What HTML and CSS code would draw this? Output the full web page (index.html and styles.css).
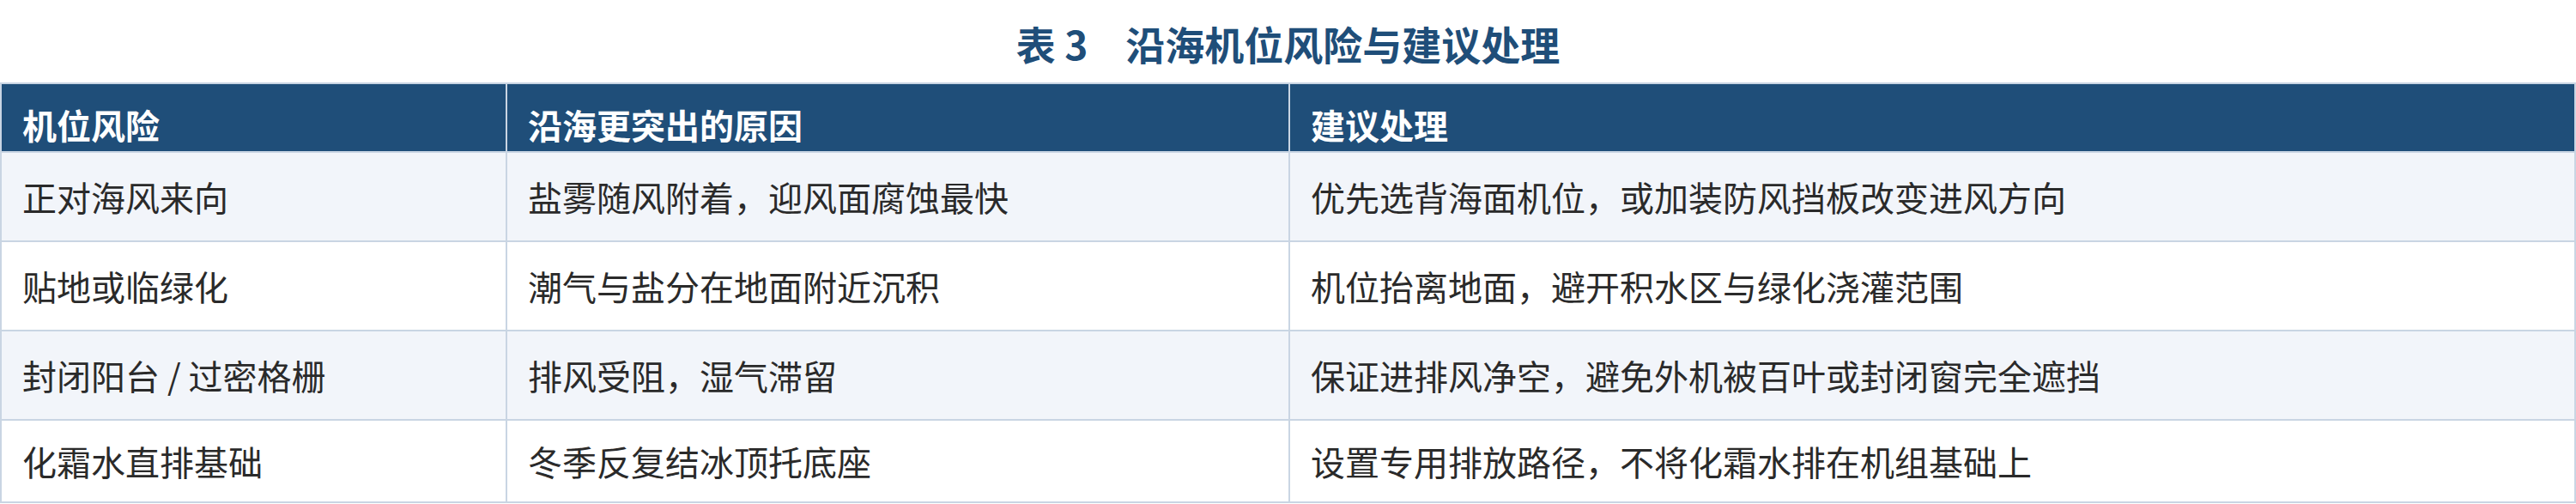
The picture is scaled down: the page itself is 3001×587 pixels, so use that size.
FILE: index.html
```html
<!DOCTYPE html>
<html lang="zh-CN">
<head>
<meta charset="utf-8">
<title>表 3 沿海机位风险与建议处理</title>
<link rel="stylesheet" href="styles.css">
</head>
<body>
<div class="page">
  <h1 class="caption">表 3<span class="gap"></span>沿海机位风险与建议处理</h1>
  <table class="risk-table">
    <colgroup>
      <col class="c1">
      <col class="c2">
      <col class="c3">
    </colgroup>
    <thead>
      <tr>
        <th>机位风险</th>
        <th>沿海更突出的原因</th>
        <th>建议处理</th>
      </tr>
    </thead>
    <tbody>
      <tr class="odd">
        <td>正对海风来向</td>
        <td>盐雾随风附着，迎风面腐蚀最快</td>
        <td>优先选背海面机位，或加装防风挡板改变进风方向</td>
      </tr>
      <tr>
        <td>贴地或临绿化</td>
        <td>潮气与盐分在地面附近沉积</td>
        <td>机位抬离地面，避开积水区与绿化浇灌范围</td>
      </tr>
      <tr class="odd">
        <td>封闭阳台 / 过密格栅</td>
        <td>排风受阻，湿气滞留</td>
        <td>保证进排风净空，避免外机被百叶或封闭窗完全遮挡</td>
      </tr>
      <tr class="last">
        <td>化霜水直排基础</td>
        <td>冬季反复结冰顶托底座</td>
        <td>设置专用排放路径，不将化霜水排在机组基础上</td>
      </tr>
    </tbody>
  </table>
</div>
</body>
</html>
```

FILE: styles.css
```css
html, body {
  margin: 0;
  padding: 0;
  background: #ffffff;
}

body {
  font-family: "Noto Sans CJK SC", "Noto Sans", sans-serif;
  color: #2a2a2a;
}

.page {
  width: 3001px;
}

.caption {
  margin: 0;
  height: 96px;
  display: flex;
  align-items: center;
  justify-content: center;
  font-size: 46px;
  font-weight: 700;
  color: #1f4e79;
  line-height: 1;
  padding-top: 4px;
  box-sizing: border-box;
}

.caption .gap {
  display: inline-block;
  width: 44px;
}

.risk-table {
  width: 3001px;
  border-collapse: collapse;
  table-layout: fixed;
  font-size: 40px;
}

.risk-table col.c1 { width: 589px; }
.risk-table col.c2 { width: 912px; }

.risk-table th,
.risk-table td {
  border: 2px solid #c9d5e3;
  text-align: left;
  padding: 0 24px;
  line-height: 1.2;
  white-space: nowrap;
}

.risk-table th {
  background: #1f4e79;
  color: #ffffff;
  font-weight: 700;
  height: 80px;
  vertical-align: middle;
  padding-top: 16px;
  box-sizing: border-box;
}

.risk-table td {
  height: 104px;
  box-sizing: border-box;
  vertical-align: middle;
}

.risk-table tr.odd td {
  background: #f2f5fa;
}

.risk-table tr.last td {
  height: 96px;
}
```
